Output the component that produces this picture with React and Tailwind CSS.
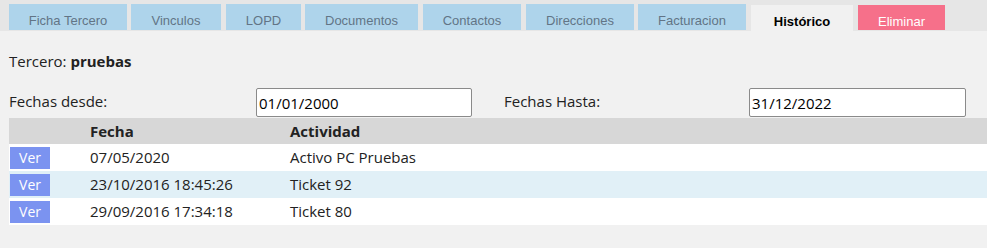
const tabs = [
  ['Ficha Tercero', 'w-[118px] ml-[9px]'],
  ['Vinculos', 'w-[90px] ml-[4px]'],
  ['LOPD', 'w-[75px] ml-[5px]'],
  ['Documentos', 'w-[113px] ml-[4px]'],
  ['Contactos', 'w-[98px] ml-[5px]'],
  ['Direcciones', 'w-[108px] ml-[5px]'],
  ['Facturacion', 'w-[108px] ml-[4px]'],
]

const filas = [
  ['07/05/2020', 'Activo PC Pruebas', 'bg-white'],
  ['23/10/2016 18:45:26', 'Ticket 92', 'bg-[#e1f0f7]'],
  ['29/09/2016 17:34:18', 'Ticket 80', 'bg-white'],
]

export default function App() {
  return (
    <div className="w-[987px] h-[248px] bg-[#f1f1f1] font-['Open_Sans','Noto_Sans',sans-serif] text-[#222] overflow-hidden">
      {/* Pestañas */}
      <div className="h-[31px] bg-[#e6e6e6] flex items-end font-['Liberation_Sans',Arial,sans-serif] text-[13px]">
        {tabs.map(([label, w]) => (
          <div key={label} className={`${w} h-[26px] mb-[1px] bg-[#aed4eb] text-[#627486] flex items-end justify-center pb-[3px] leading-none`}>
            {label}
          </div>
        ))}
        <div className="w-[102px] h-[26px] ml-[5px] bg-[#f1f1f1] text-black font-bold flex items-end justify-center pb-[3px] leading-none">
          Histórico
        </div>
        <div className="w-[87px] h-[25px] mb-[1px] ml-[5px] bg-[#f6708a] text-white flex items-end justify-center pb-[2px] leading-none">
          Eliminar
        </div>
      </div>

      <div className="pl-[9px] pt-[20px] text-[15px] leading-[20px]">
        Tercero: <span className="font-bold">pruebas</span>
      </div>

      {/* Filtros */}
      <div className="flex items-start mt-[17px] pl-[9px] text-[15px] h-[29px]">
        <div className="w-[247px] pt-[3px] leading-[20px]">Fechas desde:</div>
        <input readOnly value="01/01/2000" className="w-[216px] h-[29px] bg-white border border-[#8a8a8a] rounded-[2px] px-[2px] text-[15px] text-black outline-none" />
        <div className="w-[277px] pl-[32px] pt-[3px] leading-[20px]">Fechas Hasta:</div>
        <input readOnly value="31/12/2022" className="w-[217px] h-[29px] bg-white border border-[#8a8a8a] rounded-[2px] px-[2px] text-[15px] text-black outline-none" />
      </div>

      {/* Tabla */}
      <div className="ml-[9px] mt-[1px] text-[15px]">
        <div className="grid grid-cols-[81px_200px_1fr] h-[26px] items-center bg-[#d7d7d7] font-bold">
          <div></div>
          <div>Fecha</div>
          <div>Actividad</div>
        </div>
        {filas.map(([fecha, act, bg]) => (
          <div key={fecha} className={`grid grid-cols-[81px_200px_1fr] h-[27px] items-center ${bg}`}>
            <div className="pl-[1px]">
              <button className="w-[40px] h-[22px] bg-[#7b93f0] text-white text-[14px] leading-none">Ver</button>
            </div>
            <div>{fecha}</div>
            <div>{act}</div>
          </div>
        ))}
      </div>
    </div>
  )
}
